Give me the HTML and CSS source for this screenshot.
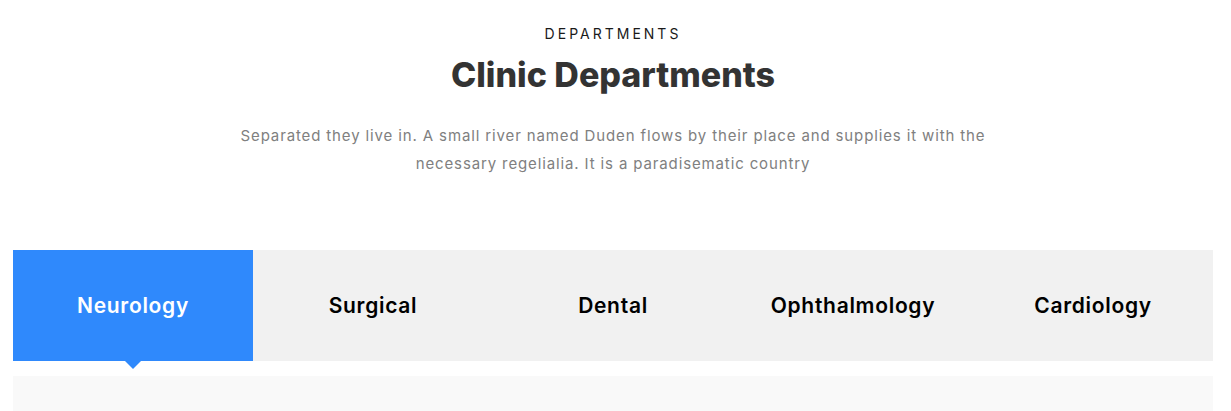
FILE: index.html
```html
<!DOCTYPE html>
<html lang="en">
<head>
<meta charset="utf-8">
<title>Clinic Departments</title>
<link rel="stylesheet" href="styles.css">
</head>
<body>
<section class="section">
  <div class="container">
    <div class="heading">
      <span class="subheading">Departments</span>
      <h2 class="title">Clinic Departments</h2>
      <p class="lead">Separated they live in. A small river named Duden flows by their place and supplies it with the necessary regelialia. It is a paradisematic country</p>
    </div>
    <div class="tabs">
      <a class="tab active">Neurology</a>
      <a class="tab">Surgical</a>
      <a class="tab">Dental</a>
      <a class="tab">Ophthalmology</a>
      <a class="tab">Cardiology</a>
    </div>
    <div class="panel"></div>
  </div>
</section>
</body>
</html>
```
FILE: styles.css
```css
* { box-sizing: border-box; }
html, body { margin: 0; padding: 0; background: #fff; }
body { font-family: "Inter", "Open Sans", sans-serif; color: #333; }
.container { width: 1200px; margin-left: 13px; }
.heading { text-align: center; padding-top: 25px; }
.subheading {
  display: block;
  font-size: 14px;
  line-height: 18px;
  letter-spacing: 3px;
  text-transform: uppercase;
  color: #1a1a1a;
  font-weight: 400;
}
.title {
  margin: 10px 0 0;
  font-size: 34px;
  line-height: 44px;
  font-weight: 800;
  color: #333;
}
.lead {
  width: 780px;
  margin: 25px auto 0;
  font-size: 15px;
  line-height: 28px;
  letter-spacing: 0.87px;
  color: #808080;
}
.tabs {
  display: flex;
  margin-top: 72px;
  background: #f1f1f1;
}
.tab {
  position: relative;
  flex: 1 1 0;
  height: 111px;
  display: flex;
  align-items: center;
  justify-content: center;
  font-size: 21px;
  letter-spacing: 0.7px;
  font-weight: 600;
  color: #000;
}
.tab.active { background: #2f89fc; color: #fff; }
.tab.active::after {
  content: "";
  position: absolute;
  left: 50%;
  bottom: -8px;
  margin-left: -8px;
  border-left: 8px solid transparent;
  border-right: 8px solid transparent;
  border-top: 8px solid #2f89fc;
}
.panel { margin-top: 15px; height: 35px; background: #f9f9f9; }
```
